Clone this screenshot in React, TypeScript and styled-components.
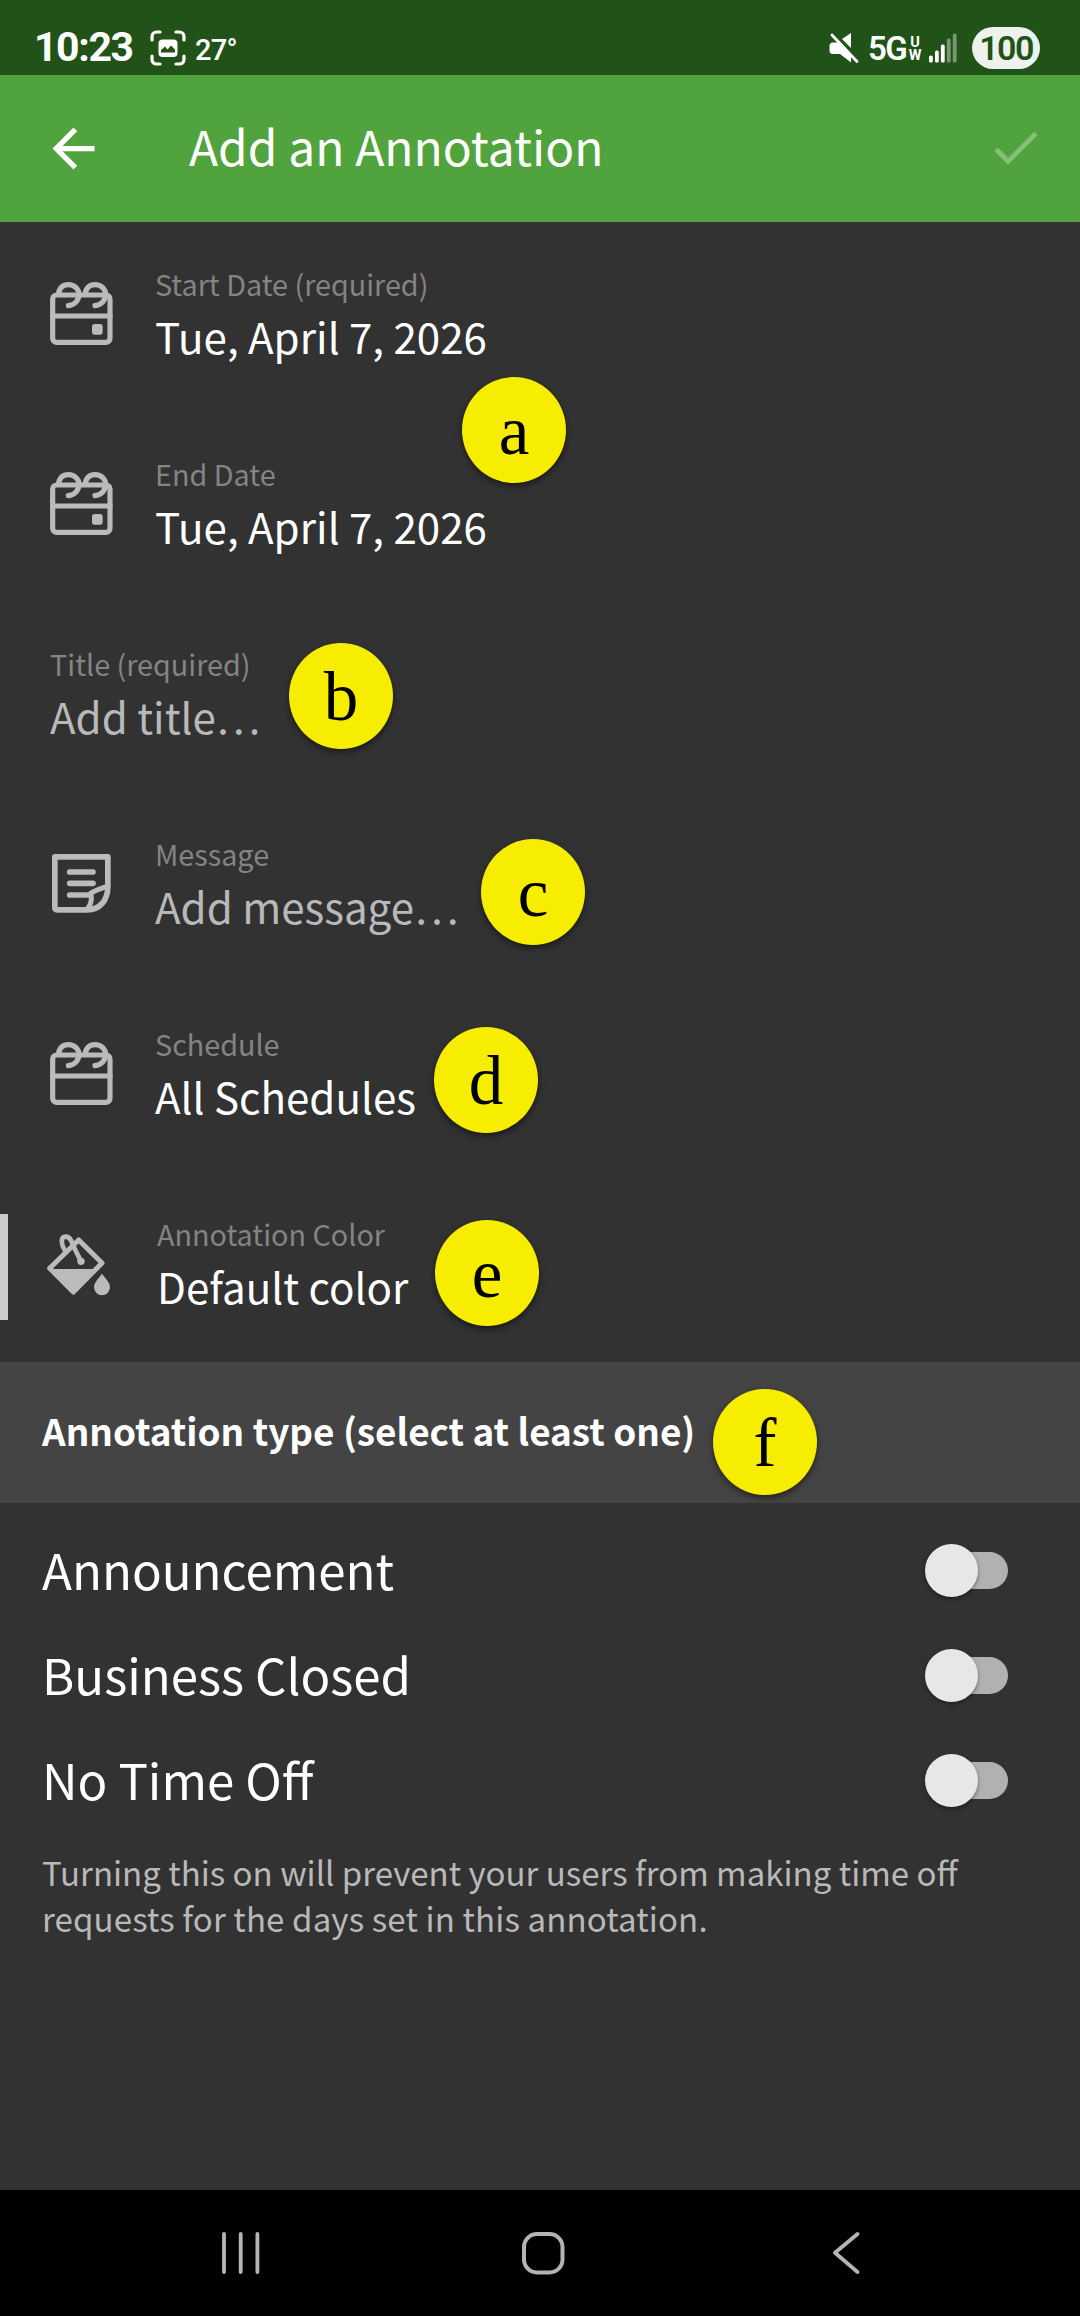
import React from "react";
import styled, { createGlobalStyle } from "styled-components";

const GlobalStyle = createGlobalStyle`
  * { box-sizing: border-box; }
  html, body { margin: 0; padding: 0; background: #323232; }
`;

const sans = `"Noto Sans CJK SC", "Noto Sans", sans-serif`;

const Screen = styled.div`
  position: relative;
  display: flex;
  flex-direction: column;
  width: 1080px;
  height: 2316px;
  overflow: hidden;
  background: #323232;
  color: #fff;
  font-family: ${sans};
  svg { display: block; flex: none; }
`;

const StatusBar = styled.div`
  display: flex;
  align-items: flex-start;
  justify-content: space-between;
  height: 75px;
  padding: 27px 40px 0 34px;
  background: #215318;
  font-family: Roboto, sans-serif;
`;

const StatusGroup = styled.div`
  display: flex;
  align-items: center;
  height: 42px;
`;

const Clock = styled.div`
  width: 116px;
  font-size: 41px;
  font-weight: 700;
  line-height: 42px;
  letter-spacing: -1.4px;
  padding-bottom: 2px;
`;

const Temperature = styled.div`
  margin-left: 9px;
  font-size: 29px;
  font-weight: 500;
  line-height: 42px;
  letter-spacing: -0.7px;
  padding-top: 4px;
`;

const Network = styled.div`
  margin-left: 9px;
  width: 40px;
  font-size: 33px;
  font-weight: 600;
  letter-spacing: -1.6px;
  line-height: 42px;
  padding-top: 2px;
`;

const Band = styled.div`
  width: 14px;
  margin-right: 7px;
  padding-top: 1px;
  font-size: 14.5px;
  font-weight: 700;
  line-height: 13px;
  text-align: center;
`;

const Battery = styled.div`
  display: flex;
  align-items: center;
  justify-content: center;
  width: 68px;
  height: 42px;
  margin-left: 15px;
  border-radius: 21px;
  background: #edf2ec;
  color: #215318;
  font-size: 34px;
  font-weight: 600;
  letter-spacing: -1.6px;
`;

const Header = styled.header`
  display: flex;
  align-items: center;
  height: 147px;
  padding: 0 35px 0 42px;
  background: #51a43d;
`;

const Title = styled.h1`
  flex: 1;
  margin: 0 0 0 84px;
  font-size: 47.9px;
  font-weight: 400;
  line-height: 70px;
  padding-bottom: 8px;
`;

const CheckIcon = styled.svg`
  margin-bottom: 2px;
`;

const Field = styled.div<{ $shift?: number; $plain?: boolean }>`
  display: flex;
  height: 190px;
  padding-top: 40px;
  padding-left: ${(p) => (p.$plain ? 50 : 46)}px;
  gap: ${(p) => 37 + (p.$shift ?? 0)}px;
  svg { margin-top: 16px; }
`;

const FieldText = styled.div`
  display: flex;
  flex-direction: column;
`;

const Label = styled.div`
  color: #848484;
  font-size: 28.75px;
  line-height: 44px;
`;

const Value = styled.div<{ $muted?: boolean }>`
  color: ${(p) => (p.$muted ? "#b9b9b9" : "#fff")};
  font-size: 42.1px;
  line-height: 60px;
`;

const SectionBar = styled.div`
  display: flex;
  align-items: center;
  height: 141px;
  padding: 0 0 5px 42px;
  background: #444;
  font-size: 36.9px;
  font-weight: 700;
`;

const Options = styled.div`
  flex: 1;
  padding: 15px 72px 0 42px;
`;

const Option = styled.div`
  display: flex;
  align-items: center;
  justify-content: space-between;
  height: 105px;
  font-size: 49.2px;
  line-height: 100px;
`;

const OptionName = styled.span`
  padding-bottom: 3px;
`;

const Track = styled.div`
  display: flex;
  align-items: center;
  width: 77px;
  height: 37px;
  border-radius: 19px;
  background: #b1b1b1;
`;

const Knob = styled.div`
  flex: none;
  width: 53px;
  height: 53px;
  margin-left: -6px;
  border-radius: 50%;
  background: #e7e7e7;
  box-shadow: 0 2px 4px rgba(0, 0, 0, 0.4);
`;

const Hint = styled.p`
  margin: 16px 0 0;
  width: 940px;
  color: #b9b9b9;
  font-size: 33px;
  line-height: 46px;
`;

const HintEnd = styled.span`
  letter-spacing: 0.13px;
`;

const NavBar = styled.nav`
  display: flex;
  align-items: center;
  height: 126px;
  padding-left: 221px;
  background: #000;
  svg + svg { margin-left: 260px; }
  svg + svg + svg { margin-left: 267px; }
`;

const Accent = styled.div`
  position: absolute;
  left: 0;
  top: 1214px;
  width: 8px;
  height: 106px;
  background: #ccc;
`;

const Marker = styled.div<{ $x: number; $y: number }>`
  position: absolute;
  left: ${(p) => p.$x}px;
  top: ${(p) => p.$y}px;
  width: 104px;
  height: 106px;
  border-radius: 50%;
  background: #f6ed00;
  box-shadow: 0 3px 6px rgba(0, 0, 0, 0.5);
  color: #000;
  font-family: "Liberation Serif", serif;
  font-size: 69px;
  line-height: 108px;
  text-align: center;
`;

const iconGrey = "#bbb";

const CalendarIcon = ({ dot }: { dot?: boolean }) => (
  <svg width="72" height="72" viewBox="48 54 216 216" fill="none" stroke={iconGrey} strokeWidth="15.5" strokeLinecap="round">
    <rect x="68" y="105" width="172" height="142" rx="12" />
    <path d="M68 168H240" />
    <path d="M85 103C88 84 98 74 115 74C134 74 147 88 147 103C147 121 134 135 115 137" />
    <path d="M165 103C168 84 178 74 195 74C214 74 227 88 227 103C227 121 214 135 195 137" />
    {dot && <rect x="186" y="192" width="32" height="32" rx="8" fill={iconGrey} stroke="none" />}
  </svg>
);

const NoteIcon = () => (
  <svg width="72" height="72" viewBox="48 54 216 216" fill="none" stroke={iconGrey} strokeWidth="17" strokeLinecap="round" strokeLinejoin="round">
    <path d="M74.5 80.5H233.5V170C233.5 212 208 239.5 172 239.5H82Q74.5 239.5 74.5 232Z" />
    <path d="M119 126H189M119 160H189M119 195H180" />
    <path d="M233 169Q202 178 183 189Q188 222 170 238" strokeWidth="15" />
  </svg>
);

const BucketIcon = () => (
  <svg width="72" height="72" viewBox="48 54 216 216" fill="none" stroke={iconGrey} strokeWidth="15" strokeLinecap="round" strokeLinejoin="round">
    <path d="M146 90L216 159L130 246L59 175Z" />
    <path d="M58 177H202L130 248Z" fill={iconGrey} stroke="none" />
    <path d="M104 120C93 103 91 80 107 80C122 80 125 96 132 112L152 152" strokeWidth="14" />
    <circle cx="153" cy="154" r="11" fill={iconGrey} stroke="none" />
    <path d="M216 191C226 205 240 217 240 232A24 24 0 0 1 192 232C192 217 206 205 216 191Z" fill={iconGrey} stroke="none" />
  </svg>
);

const ScanIcon = () => (
  <svg width="36" height="36" viewBox="0 0 36 36" fill="none">
    <path
      d="M2 10V7Q2 2 7 2H10M26 2H29Q34 2 34 7V10M34 26V29Q34 34 29 34H26M10 34H7Q2 34 2 29V26"
      stroke="#fff"
      strokeWidth="3.2"
      strokeLinecap="round"
    />
    <rect x="8.5" y="9.5" width="19" height="17.5" rx="4" fill="#fff" />
    <path d="M11 22.5V20L15 16.5L17.5 19.5L21 15.5L25 19.5V22.5Z" fill="#215318" />
  </svg>
);

const MuteIcon = () => (
  <svg width="30" height="32" viewBox="0 0 30 32">
    <path d="M22 1V16L13 7Z" fill="#fff" />
    <path d="M0.500 14Q0.500 10.500 4 10.500H8.500L22 24V30.500L11 22H4Q0.500 22 0.500 18.500Z" fill="#fff" />
    <path d="M3 3L28 29.500" stroke="#fff" strokeWidth="2.800" strokeLinecap="round" />
  </svg>
);

const SignalIcon = () => (
  <svg width="28" height="30" viewBox="0 0 28 30">
    {[7, 12, 18, 24, 29].map((h, i) => (
      <rect key={h} x={i * 5.95} y={29.5 - h} width="3.800" height={h} rx="1.600" fill="#fff" opacity={i > 2 ? 0.4 : 1} />
    ))}
  </svg>
);

const fields = [
  { label: "Start Date (required)", value: "Tue, April 7, 2026", icon: <CalendarIcon dot /> },
  { label: "End Date", value: "Tue, April 7, 2026", icon: <CalendarIcon dot /> },
  { label: "Title (required)", value: "Add title…", muted: true },
  { label: "Message", value: "Add message…", muted: true, icon: <NoteIcon /> },
  { label: "Schedule", value: "All Schedules", icon: <CalendarIcon /> },
  { label: "Annotation Color", value: "Default color", icon: <BucketIcon />, shift: 2 },
];

const markers: [string, number, number][] = [
  ["a", 462, 377],
  ["b", 289, 643],
  ["c", 481, 839],
  ["d", 434, 1027],
  ["e", 435, 1220],
  ["f", 713, 1389],
];

export default function App() {
  return (
    <>
      <GlobalStyle />
      <Screen>
        <StatusBar>
          <StatusGroup>
            <Clock>10:23</Clock>
            <ScanIcon />
            <Temperature>27°</Temperature>
          </StatusGroup>
          <StatusGroup>
            <MuteIcon />
            <Network>5G</Network>
            <Band>
              U<br />W
            </Band>
            <SignalIcon />
            <Battery>100</Battery>
          </StatusGroup>
        </StatusBar>
        <Header>
          <svg width="63" height="63" viewBox="0 0 24 24" fill="#fff">
            <path d="M20 11H7.830l5.590-5.590L12 4l-8 8 8 8 1.410-1.410L7.830 13H20v-2z" />
          </svg>
          <Title>Add an Annotation</Title>
          <CheckIcon width="59" height="59" viewBox="0 0 24 24" fill="#fff" opacity="0.300">
            <path d="M9 16.170L4.830 12l-1.420 1.410L9 19 21 7l-1.410-1.410z" />
          </CheckIcon>
        </Header>
        {fields.map((f) => (
          <Field key={f.label} $plain={!f.icon} $shift={f.shift}>
            {f.icon}
            <FieldText>
              <Label>{f.label}</Label>
              <Value $muted={f.muted}>{f.value}</Value>
            </FieldText>
          </Field>
        ))}
        <SectionBar>Annotation type (select at least one)</SectionBar>
        <Options>
          {["Announcement", "Business Closed", "No Time Off"].map((name) => (
            <Option key={name}>
              <OptionName>{name}</OptionName>
              <Track>
                <Knob />
              </Track>
            </Option>
          ))}
          <Hint>
            Turning this on will prevent your users from making time off
            <br />
            <HintEnd>requests for the days set in this annotation.</HintEnd>
          </Hint>
        </Options>
        <NavBar>
          <svg width="40" height="44" viewBox="0 0 40 44" stroke="#b4b4b4" strokeWidth="3.800" strokeLinecap="round">
            <path d="M3 3V41M19.700 3V41M36.400 3V41" />
          </svg>
          <svg width="44" height="44" viewBox="0 0 44 44" fill="none" stroke="#b4b4b4" strokeWidth="4">
            <rect x="3" y="3" width="38.500" height="38.500" rx="13" />
          </svg>
          <svg width="28" height="44" viewBox="0 0 28 44" fill="none" stroke="#b4b4b4" strokeWidth="3.800" strokeLinecap="round" strokeLinejoin="round">
            <path d="M25.500 3L3 21.800L25.500 41" />
          </svg>
        </NavBar>
        <Accent />
        {markers.map(([letter, x, y]) => (
          <Marker key={letter} $x={x} $y={y}>
            {letter}
          </Marker>
        ))}
      </Screen>
    </>
  );
}
